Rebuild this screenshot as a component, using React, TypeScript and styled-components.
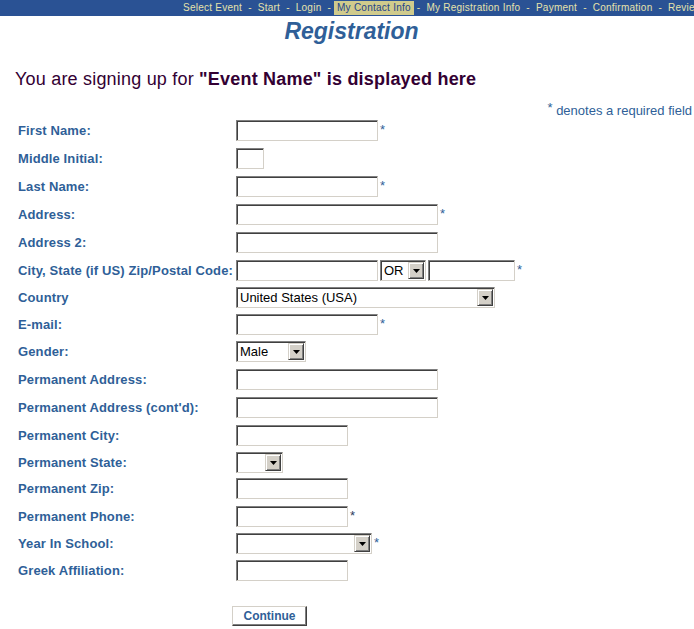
import React from "react";
import styled, { createGlobalStyle } from "styled-components";

const GlobalStyle = createGlobalStyle`
  body {
    margin: 0;
    background: #ffffff;
    font-family: "Liberation Sans", Arial, sans-serif;
  }
`;

const Nav = styled.nav`
  height: 16px;
  background: #2a5294;
  display: flex;
  align-items: center;
  padding-left: 180px;
  overflow: hidden;
  white-space: nowrap;
  font-size: 10px;
  letter-spacing: 0.25px;
  color: #e6e3ab;
`;

const NavItem = styled.span<{ $active?: boolean }>`
  padding: 0 3px;
  line-height: 14px;
  background: ${(p) => (p.$active ? "#d0cb8c" : "transparent")};
  color: ${(p) => (p.$active ? "#23448a" : "inherit")};
`;

const NavSep = styled.span`
  padding: 0 3px;
  line-height: 14px;
`;

const Title = styled.h1`
  margin: 2px 0 0;
  padding-left: 9px;
  text-align: center;
  font-size: 23px;
  font-weight: bold;
  font-style: italic;
  line-height: 26px;
  color: #2f5f98;
`;

const Heading = styled.h2`
  margin: 24px 0 0;
  padding-left: 15px;
  font-size: 18px;
  font-weight: normal;
  letter-spacing: 0.2px;
  line-height: 22px;
  color: #330033;
`;

const Note = styled.p`
  margin: 10px 0 0;
  padding-right: 2px;
  text-align: right;
  font-size: 13px;
  line-height: 16px;
  color: #2f5f98;
`;

const NoteStar = styled.span`
  vertical-align: 3px;
`;

const Form = styled.form`
  padding-top: 1px;
`;

const Row = styled.div<{ $h: number }>`
  display: grid;
  grid-template-columns: 218px auto;
  align-items: start;
  padding-left: 18px;
  height: ${(p) => p.$h}px;
`;

const Label = styled.label`
  font-size: 13px;
  font-weight: bold;
  letter-spacing: 0.12px;
  line-height: 21px;
  color: #2f5f98;
  white-space: nowrap;
`;

const Field = styled.div`
  display: flex;
  align-items: flex-start;
  gap: 2px;
`;

const Star = styled.span<{ $dark?: boolean }>`
  font-size: 13px;
  line-height: 19px;
  color: ${(p) => (p.$dark ? "#2b3c5e" : "#2f5f98")};
`;

const TextInput = styled.input<{ $w: number }>`
  box-sizing: border-box;
  width: ${(p) => p.$w}px;
  height: 21px;
  margin: 0;
  padding: 0 3px;
  border: 1px solid;
  border-color: #808080 #d4d0c8 #d4d0c8 #808080;
  box-shadow: inset 1px 1px 0 #404040;
  background: #ffffff;
  font-family: "Liberation Sans", Arial, sans-serif;
  font-size: 13px;
  outline: none;
`;

const SelectBox = styled.div<{ $w: number }>`
  box-sizing: border-box;
  width: ${(p) => p.$w}px;
  height: 21px;
  display: flex;
  align-items: stretch;
  padding: 1px;
  border: 1px solid;
  border-color: #808080 #d4d0c8 #d4d0c8 #808080;
  box-shadow: inset 1px 1px 0 #404040;
  background: #ffffff;
`;

const NativeSelect = styled.select`
  flex: 1;
  min-width: 0;
  margin: 0;
  padding: 0 0 0 2px;
  border: none;
  background: transparent;
  appearance: none;
  -webkit-appearance: none;
  font-family: "Liberation Sans", Arial, sans-serif;
  font-size: 13px;
  color: #000;
  outline: none;
`;

const ArrowButton = styled.span`
  box-sizing: border-box;
  width: 16px;
  flex: none;
  display: flex;
  align-items: center;
  justify-content: center;
  background: #d4d0c8;
  border: 1px solid;
  border-color: #d4d0c8 #404040 #404040 #d4d0c8;
  box-shadow: inset 1px 1px 0 #ffffff, inset -1px -1px 0 #808080;
`;

const ButtonRow = styled.div`
  padding-left: 232px;
  margin-top: 19px;
`;

const ContinueButton = styled.button`
  box-sizing: border-box;
  width: 75px;
  height: 20px;
  padding: 0;
  background: #ffffff;
  border: 1px solid;
  border-color: #d4d0c8 #404040 #404040 #d4d0c8;
  box-shadow: inset -1px -1px 0 #808080;
  font-family: "Liberation Sans", Arial, sans-serif;
  font-size: 12px;
  font-weight: bold;
  color: #2f5f98;
`;

const Arrow = () => (
  <svg width="7" height="4" viewBox="0 0 7 4">
    <path d="M0 0h7L3.5 4z" fill="#000" />
  </svg>
);

const Select = ({ w, value }: { w: number; value: string }) => (
  <SelectBox $w={w}>
    <NativeSelect defaultValue={value}>
      <option value={value}>{value}</option>
    </NativeSelect>
    <ArrowButton>
      <Arrow />
    </ArrowButton>
  </SelectBox>
);

type FieldDef = {
  label: string;
  h: number;
  kind: "text" | "select" | "city";
  w?: number;
  value?: string;
  req?: boolean;
  dark?: boolean;
};

const rows: FieldDef[] = [
  { label: "First Name:", h: 28, kind: "text", w: 142, req: true },
  { label: "Middle Initial:", h: 28, kind: "text", w: 28 },
  { label: "Last Name:", h: 28, kind: "text", w: 142, req: true },
  { label: "Address:", h: 28, kind: "text", w: 202, req: true },
  { label: "Address 2:", h: 28, kind: "text", w: 202 },
  { label: "City, State (if US) Zip/Postal Code:", h: 27, kind: "city" },
  { label: "Country", h: 27, kind: "select", w: 259, value: "United States (USA)" },
  { label: "E-mail:", h: 27, kind: "text", w: 142, req: true },
  { label: "Gender:", h: 28, kind: "select", w: 70, value: "Male" },
  { label: "Permanent Address:", h: 28, kind: "text", w: 202 },
  { label: "Permanent Address (cont'd):", h: 28, kind: "text", w: 202 },
  { label: "Permanent City:", h: 27, kind: "text", w: 112 },
  { label: "Permanent State:", h: 26, kind: "select", w: 47, value: "" },
  { label: "Permanent Zip:", h: 28, kind: "text", w: 112 },
  { label: "Permanent Phone:", h: 27, kind: "text", w: 112, req: true, dark: true },
  { label: "Year In School:", h: 27, kind: "select", w: 136, value: "", req: true },
  { label: "Greek Affiliation:", h: 27, kind: "text", w: 112 },
];

const navItems = [
  "Select Event",
  "Start",
  "Login",
  "My Contact Info",
  "My Registration Info",
  "Payment",
  "Confirmation",
  "Review",
];

export default function App() {
  return (
    <>
      <GlobalStyle />
      <Nav>
        {navItems.map((item, i) => (
          <React.Fragment key={item}>
            {i > 0 && <NavSep>-</NavSep>}
            <NavItem $active={item === "My Contact Info"}>{item}</NavItem>
          </React.Fragment>
        ))}
      </Nav>
      <Title>Registration</Title>
      <Heading>
        You are signing up for <strong>"Event Name" is displayed here</strong>
      </Heading>
      <Note>
        <NoteStar>*</NoteStar> denotes a required field
      </Note>
      <Form onSubmit={(e) => e.preventDefault()}>
        {rows.map((r) => (
          <Row key={r.label} $h={r.h}>
            <Label>{r.label}</Label>
            <Field>
              {r.kind === "text" && <TextInput $w={r.w ?? 100} />}
              {r.kind === "select" && <Select w={r.w ?? 100} value={r.value ?? ""} />}
              {r.kind === "city" && (
                <>
                  <TextInput $w={142} />
                  <Select w={46} value="OR" />
                  <TextInput $w={87} />
                  <Star>*</Star>
                </>
              )}
              {r.req && <Star $dark={r.dark}>*</Star>}
            </Field>
          </Row>
        ))}
        <ButtonRow>
          <ContinueButton type="submit">Continue</ContinueButton>
        </ButtonRow>
      </Form>
    </>
  );
}
